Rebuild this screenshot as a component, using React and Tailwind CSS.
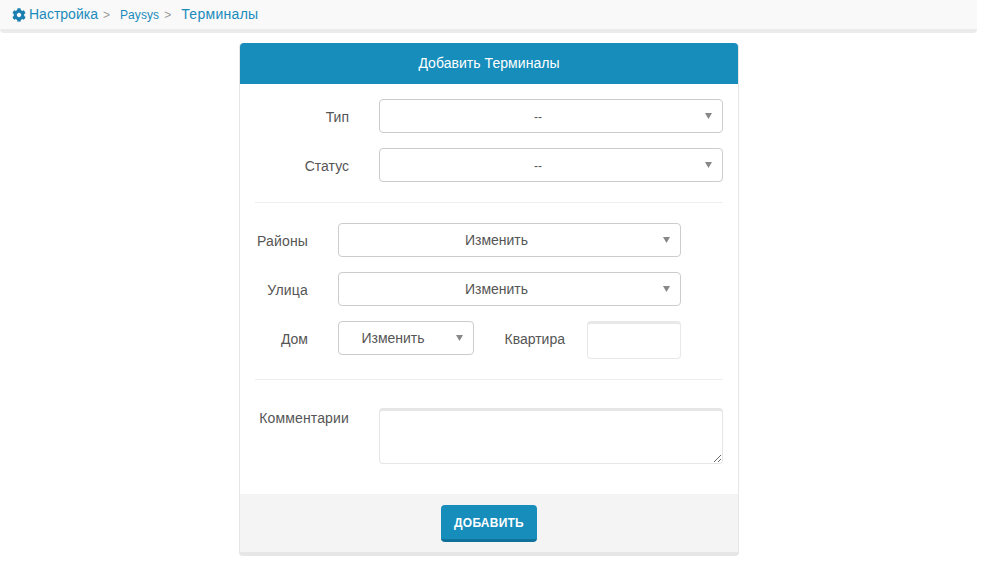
import React from "react";
import { FaCog } from "react-icons/fa";

const font = { fontFamily: '"Liberation Sans", Arial, sans-serif' };

const FakeSelect = ({ value, className = "", small = false }) => (
  <div
    className={`relative h-[34px] rounded-[4px] border border-[#cccccc] bg-white text-[#555] flex items-center justify-center ${small ? "text-[12px] pt-[2px]" : "text-[14px]"} ${className}`}
  >
    <span className="pr-[26px]">{value}</span>
    <svg className="absolute right-[10px] top-[13px]" width="7" height="6" viewBox="0 0 7 6">
      <polygon points="0,0 7,0 3.5,6" fill="#888888" />
    </svg>
  </div>
);

const Label = ({ children, className = "" }) => (
  <div className={`text-[14px] leading-[20px] text-[#555] text-right ${className}`}>{children}</div>
);

const Divider = ({ className = "" }) => <div className={`h-px bg-[#eeeeee] ${className}`} />;

export default function App() {
  return (
    <div className="bg-white min-h-[566px] w-[981px] overflow-hidden" style={font}>
      {/* breadcrumb */}
      <div className="w-[977px] h-[33px] bg-[#f9f9f9] border-b-4 border-[#ebebeb] rounded-b-[4px] flex items-center pl-[12px] text-[#1a8bbb]">
        <FaCog className="w-[14px] h-[14px] text-[#1a7fb0]" />
        <span className="ml-[3px] text-[14px]">Настройка</span>
        <span className="ml-[5px] text-[12px] text-[#999]">&gt;</span>
        <span className="ml-[10px] text-[12px] tracking-[0.1px]">Paysys</span>
        <span className="ml-[5px] text-[12px] text-[#999]">&gt;</span>
        <span className="ml-[10px] text-[14px] tracking-[0.3px]">Терминалы</span>
      </div>

      {/* panel */}
      <div className="w-[500px] ml-[239px] mt-[10px] h-[513px] rounded-[4px] border-x border-b-4 border-[#e6e6e6] flex flex-col">
        <div className="h-[41px] bg-[#168dbb] rounded-t-[4px] flex items-center justify-center text-white text-[14px] font-normal tracking-[0.05px]">
          Добавить Терминалы
        </div>

        <div className="flex-1 pt-[15px] pl-[15px] pr-[15px]">
          <div className="flex items-center h-[34px]">
            <Label className="w-[94px] pt-[2px]">Тип</Label>
            <FakeSelect value="--" small className="ml-[30px] w-[344px]" />
          </div>
          <div className="flex items-center h-[34px] mt-[15px]">
            <Label className="w-[94px] pt-[2px]">Статус</Label>
            <FakeSelect value="--" small className="ml-[30px] w-[344px]" />
          </div>

          <Divider className="mt-[20px]" />

          <div className="flex items-center h-[34px] mt-[20px]">
            <Label className="w-[53px] pt-[2px] tracking-[0.15px]">Районы</Label>
            <FakeSelect value="Изменить" className="ml-[30px] w-[343px]" />
          </div>
          <div className="flex items-center h-[34px] mt-[15px]">
            <Label className="w-[53px] pt-[2px] tracking-[0.2px]">Улица</Label>
            <FakeSelect value="Изменить" className="ml-[30px] w-[343px]" />
          </div>
          <div className="flex items-start mt-[15px]">
            <Label className="w-[53px] mt-[8px]">Дом</Label>
            <FakeSelect value="Изменить" className="ml-[30px] w-[136px]" />
            <Label className="w-[91px] mt-[8px]">Квартира</Label>
            <div className="ml-[22px] w-[94px] h-[38px] rounded-[4px] border border-[#e8e8e8] border-t-[3px] bg-white" />
          </div>

          <Divider className="mt-[20px]" />

          <div className="flex items-start mt-[28px]">
            <Label className="w-[94px] tracking-[0.15px]">Комментарии</Label>
            <textarea className="ml-[30px] w-[344px] h-[56px] rounded-[4px] border border-[#e6e6e6] border-t-[3px] bg-white outline-none" />
          </div>
        </div>

        <div className="h-[58px] bg-[#f4f4f4] flex items-start justify-center pt-[11px]">
          <button className="w-[96px] h-[37px] pt-[2px] rounded-[4px] bg-[#168dbb] border-b-[3px] border-[#10729b] text-white text-[12px] font-bold tracking-[0.25px]">
            ДОБАВИТЬ
          </button>
        </div>
      </div>
    </div>
  );
}
